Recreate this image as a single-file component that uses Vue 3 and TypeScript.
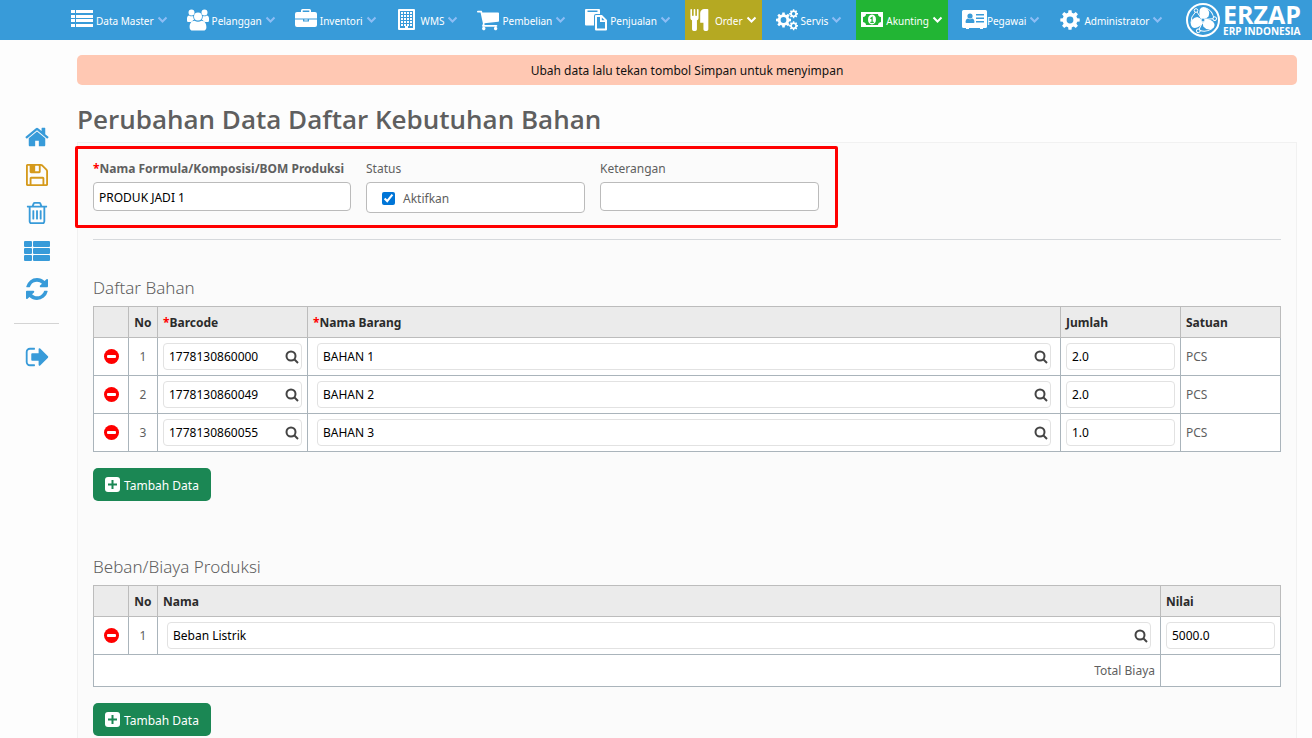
<script setup lang="ts">
import { ref } from 'vue'

interface Icon { box: string; d: string }
interface Material { barcode: string; name: string; qty: string; unit: string }
interface Cost { name: string; value: string }

const rect = (x: number, y: number, w: number, h: number, r = 0): string =>
  `M${x + r} ${y}h${w - 2 * r}a${r} ${r} 0 0 1 ${r} ${r}v${h - 2 * r}a${r} ${r} 0 0 1 ${-r} ${r}h${2 * r - w}a${r} ${r} 0 0 1 ${-r} ${-r}v${2 * r - h}a${r} ${r} 0 0 1 ${r} ${-r}z`

const disc = (cx: number, cy: number, r: number): string =>
  `M${cx - r} ${cy}a${r} ${r} 0 1 0 ${2 * r} 0a${r} ${r} 0 1 0 ${-2 * r} 0z`

const gear = (cx: number, cy: number, r: number, teeth: number, hole: number): string => {
  const step = (Math.PI * 2) / teeth
  const pts: string[] = []
  for (let i = 0; i < teeth; i++) {
    const shape: [number, number][] = [[-0.32, 0.76], [-0.2, 1], [0.2, 1], [0.32, 0.76]]
    for (const [a, k] of shape) {
      const t = (i + a) * step
      pts.push(`${(cx + Math.sin(t) * r * k).toFixed(2)} ${(cy - Math.cos(t) * r * k).toFixed(2)}`)
    }
  }
  return `M${pts.join('L')}z${disc(cx, cy, hole)}`
}

const windows = [0, 1, 2, 3, 4].flatMap(r => [0, 1, 2, 3].map(c => rect(3 + c * 3, 3 + r * 3, 2, 2))).join('')

const icons: Record<string, Icon> = {
  list: {
    box: '0 0 22 22',
    d: [1, 6, 10, 15].map(y => rect(0, y, 4, 3) + rect(5, y, 17, 3)).join(''),
  },
  users: {
    box: '0 0 22 22',
    d: disc(4.5, 3.4, 3) + disc(17.5, 3.4, 3) +
      'M2.200 6.500C.6 6.800-.3 8 0 11.400c0 1 .6 1.600 1.600 1.600h3.300c.5-1.200 1.300-2 2.300-2.300C6.400 9.600 6 8.400 6.300 6.900 5 7.600 3.500 7.500 2.200 6.500z' +
      'M19.800 6.500c1.600.3 2.500 1.500 2.200 4.900 0 1-.6 1.600-1.600 1.600h-3.300c-.5-1.200-1.300-2-2.300-2.300.8-1.100 1.200-2.300.9-3.800 1.300.7 2.800.6 4.100-.4z' +
      disc(11, 7.4, 4) +
      'M7.500 11.700c2.200 1.400 4.800 1.400 7 0 3 .2 4.900 2.300 4.900 6.500 0 2.300-1.300 3.400-3.100 3.400H5.700C3.900 21.600 2.600 20.500 2.600 18.200c0-4.200 1.900-6.300 4.900-6.500z',
  },
  briefcase: {
    box: '0 0 22 22',
    d: 'M6 3V1.500Q6 0 7.500 0h7Q16 0 16 1.500V3h4q2 0 2 2v4.500H0V5q0-2 2-2zM7.700 3h6.600V1.600H7.700zM0 10.500h8v2h6v-2h8v5.500q0 2-2 2H2q-2 0-2-2zM9.300 10.500h3.400v1H9.300z',
  },
  building: {
    box: '-2 0 22 22',
    d: rect(0, 0, 17, 21, 1) + 'M2 2v17h5v-2h3v2h5V2z' + windows,
  },
  cart: {
    box: '0 128 1664 1536',
    d: 'M640 1536q0 52-38 90t-90 38-90-38-38-90 38-90 90-38 90 38 38 90zm896 0q0 52-38 90t-90 38-90-38-38-90 38-90 90-38 90 38 38 90zm128-1088v512q0 24-16.500 42.500T1607 1024L563 1146q13 60 13 70 0 16-24 64h920q26 0 45 19t19 45-19 45-45 19H448q-26 0-45-19t-19-45q0-11 8-31.500t16-36 21.500-40T445 1134L268 320H64q-26 0-45-19T0 256t19-45 45-19h256q16 0 28.500 6.500t19.500 15.500 13 24.500 8 26 5.500 29.500 4.500 26h1201q26 0 45 19t19 45z',
  },
  paste: {
    box: '0 0 22 22',
    d: 'M1 0h13q1 0 1 1v4h-4q-2 0-2 2v9.500H1q-1 0-1-1V1q0-1 1-1zM2.500 1.500v1.400h10V1.500zM11 6h6l5 5v9.500q0 1-1 1H11q-1 0-1-1V7q0-1 1-1zM12 8v11.600h8V13h-5V8zM16.800 8.400v2.800h2.800z',
  },
  cutlery: {
    box: '128 64 1408 1728',
    d: 'M640 128v640q0 61-35.500 111T512 950v714q0 52-38 90t-90 38H256q-52 0-90-38t-38-90V950q-57-21-92.500-71T0 768V128q0-26 19-45T64 64t45 19 19 45v416q0 26 19 45t45 19 45-19 19-45V128q0-26 19-45t45-19 45 19 19 45v416q0 26 19 45t45 19 45-19 19-45V128q0-26 19-45t45-19 45 19 19 45zm768 0v1536q0 52-38 90t-90 38h-128q-52 0-90-38t-38-90v-512H800q-13 0-22.500-9.500T768 1120V384q0-132 94-226t226-94h256q26 0 45 19t19 45z',
  },
  cogs: {
    box: '0 0 22 22',
    d: gear(7.500, 11, 7.600, 8, 2.900) + gear(17.600, 4.800, 4.500, 8, 1.700) + gear(17.600, 16.800, 4.500, 8, 1.700),
  },
  money: {
    box: '0 0 22 22',
    d: rect(0, 3, 22, 15) + 'M5 5H17q0 2.500 3 3v5q-3 .5-3 3H5q0-2.500-3-3V8q3-.5 3-3z' +
      'M11 5.500c2.600 0 4 2.200 4 5s-1.400 5-4 5-4-2.200-4-5 1.400-5 4-5zM11.200 7.500L9.300 9v1h1.200v2.700H9.300V14h3.500v-1.300h-1.100V7.500z',
  },
  card: {
    box: '0 0 25 22',
    d: 'M1.500 1h22Q25 1 25 2.500v15q0 1.500-1.500 1.500H21v1h-3v-1H7v1H4v-1H1.500Q0 19 0 17.500v-15Q0 1 1.500 1z' +
      disc(8, 7, 2.600) + 'M5.500 9.500Q3.500 10 3.500 13q0 1 1 1h7q1 0 1-1 0-3-2-3.500-2.500 1.500-5 0z' +
      rect(14, 5, 8, 1.400) + rect(14, 8.500, 8, 1.400) + rect(14, 12, 8, 1.400),
  },
  cog: { box: '0 0 22 22', d: gear(11, 11, 9.800, 8, 3.400) },
  home: {
    box: '0 128 1664 1536',
    d: 'M1408 992v480q0 26-19 45t-45 19H960v-384H704v384H320q-26 0-45-19t-19-45V992q0-1 .5-3t.5-3l575-474 575 474q1 2 1 6zm223-69l-62 74q-8 9-21 11h-3q-13 0-21-7L832 424 140 1001q-12 8-24 7-13-2-21-11l-62-74q-8-10-7-23.500T37 878L756 279q32-26 76-26t76 26l244 204V288q0-14 9-23t23-9h192q14 0 23 9t9 23v408l219 182q10 8 11 21.500t-7 23.500z',
  },
  save: {
    box: '0 128 1536 1536',
    d: 'M384 1536h768v-384H384v384zm896 0h128V640q0-14-10-38.500t-20-34.500l-281-281q-10-10-34-20t-39-10v416q0 40-28 68t-68 28H352q-40 0-68-28t-28-68V256H128v1280h128v-416q0-40 28-68t68-28h832q40 0 68 28t28 68v416zM896 608V288q0-13-9.500-22.500T864 256H672q-13 0-22.500 9.500T640 288v320q0 13 9.500 22.500T672 640h192q13 0 22.500-9.500T896 608zm640 32v928q0 40-28 68t-68 28H96q-40 0-68-28t-28-68V224q0-40 28-68t68-28h928q40 0 88 20t76 48l280 280q28 28 48 76t20 88z',
  },
  trash: {
    box: '0 128 1408 1536',
    d: 'M512 736v576q0 14-9 23t-23 9h-64q-14 0-23-9t-9-23V736q0-14 9-23t23-9h64q14 0 23 9t9 23zm256 0v576q0 14-9 23t-23 9h-64q-14 0-23-9t-9-23V736q0-14 9-23t23-9h64q14 0 23 9t9 23zm256 0v576q0 14-9 23t-23 9h-64q-14 0-23-9t-9-23V736q0-14 9-23t23-9h64q14 0 23 9t9 23zm128 724V512H256v948q0 22 7 40.500t14.500 27 10.500 8.500h832q3 0 10.500-8.500t14.500-27 7-40.500zM480 384h448l-48-117q-7-9-17-11H546q-10 2-17 11zm928 32v64q0 14-9 23t-23 9h-96v948q0 83-47 143.500t-113 60.500H288q-66 0-113-58.500T128 1464V512H32q-14 0-23-9t-9-23v-64q0-14 9-23t23-9h309l70-167q15-37 54-63t79-26h320q40 0 79 26t54 63l70 167h309q14 0 23 9t9 23z',
  },
  rows: {
    box: '0 0 26 22',
    d: [1, 8, 15].map(y => rect(0, y, 8, 6, 1) + rect(9, y, 17, 6, 1)).join(''),
  },
  refresh: {
    box: '0 128 1536 1536',
    d: 'M1511 1056q0 5-1 7-64 268-268 434.500T764 1664q-146 0-282.500-55T238 1452l-129 129q-19 19-45 19t-45-19-19-45v-448q0-26 19-45t45-19h448q26 0 45 19t19 45-19 45l-137 137q71 66 161 102t187 36q134 0 250-65t186-179q11-17 53-117 8-23 30-23h192q13 0 22.500 9.500t9.500 22.500zm25-800v448q0 26-19 45t-45 19h-448q-26 0-45-19t-19-45 19-45l138-138Q969 384 768 384q-134 0-250 65T332 628q-11 17-53 117-8 23-30 23H50q-13 0-22.500-9.500T18 736v-7q65-268 270-434.500T768 128q146 0 284 55.500T1297 340l130-129q19-19 45-19t45 19 19 45z',
  },
  exit: {
    box: '0 128 1568 1536',
    d: 'M640 1440q0 4 1 20t.5 26.500-3 23.500-10 19.500-20.500 6.500H288q-119 0-203.500-84.500T0 1248V544q0-119 84.500-203.500T288 256h320q13 0 22.500 9.500T640 288q0 4 1 20t.5 26.500-3 23.500-10 19.500T608 384H288q-66 0-113 47t-47 113v704q0 66 47 113t113 47h312q40 4 40 32zm928-544q0 26-19 45l-544 544q-19 19-45 19t-45-19-19-45v-288H448q-26 0-45-19t-19-45V704q0-26 19-45t45-19h448V352q0-26 19-45t45-19 45 19l544 544q19 19 19 45z',
  },
}

const menu = [
  { label: 'Data Master', icon: 'list' },
  { label: 'Pelanggan', icon: 'users' },
  { label: 'Inventori', icon: 'briefcase' },
  { label: 'WMS', icon: 'building' },
  { label: 'Pembelian', icon: 'cart' },
  { label: 'Penjualan', icon: 'paste' },
  { label: 'Order', icon: 'cutlery', tone: 'olive' },
  { label: 'Servis', icon: 'cogs' },
  { label: 'Akunting', icon: 'money', tone: 'green' },
  { label: 'Pegawai', icon: 'card' },
  { label: 'Administrator', icon: 'cog' },
]

const tools = [
  { label: 'Beranda', icon: 'home' },
  { label: 'Simpan', icon: 'save' },
  { label: 'Hapus', icon: 'trash' },
  { label: 'Daftar', icon: 'rows' },
  { label: 'Muat ulang', icon: 'refresh' },
]

const formulaName = ref('PRODUK JADI 1')
const active = ref(true)
const note = ref('')
const materials = ref<Material[]>([
  { barcode: '1778130860000', name: 'BAHAN 1', qty: '2.0', unit: 'PCS' },
  { barcode: '1778130860049', name: 'BAHAN 2', qty: '2.0', unit: 'PCS' },
  { barcode: '1778130860055', name: 'BAHAN 3', qty: '1.0', unit: 'PCS' },
])
const costs = ref<Cost[]>([{ name: 'Beban Listrik', value: '5000.0' }])

const addMaterial = () => materials.value.push({ barcode: '', name: '', qty: '', unit: '' })
const addCost = () => costs.value.push({ name: '', value: '' })
</script>

<template>
  <div class="app">
    <header class="topbar">
      <nav class="menu">
        <a v-for="m in menu" :key="m.label" href="#" class="menu-item" :class="m.tone">
          <svg class="menu-icon" :class="m.icon" :viewBox="icons[m.icon].box" aria-hidden="true">
            <path :d="icons[m.icon].d" fill-rule="evenodd" />
          </svg>
          <span class="menu-label">{{ m.label }}</span>
          <svg class="caret" viewBox="0 0 11 8" aria-hidden="true"><path d="M1.500 1.500l4 4 4-4" /></svg>
        </a>
      </nav>
      <a href="#" class="brand">
        <svg class="brand-mark" viewBox="0 0 34 34" aria-hidden="true">
          <circle cx="17" cy="17" r="16" class="ring" />
          <g v-for="a in [0, 120, 240]" :key="a" :transform="`rotate(${a} 17 17)`">
            <path class="leaf" d="M14.500 15.500Q12.500 10 14 6 16 3 20 4.500 24.500 8 22.500 13.500L20 15.500z" />
            <path class="orbit" d="M9.500 9Q4.500 13.500 5 20" />
            <path class="orbit" d="M11 9l4 6" />
            <circle class="node" cx="10" cy="7.500" r="1.800" />
          </g>
          <circle class="node" cx="17" cy="17" r="2" />
        </svg>
        <span class="brand-text">
          <span class="brand-name">ERZAP</span>
          <span class="brand-sub">ERP INDONESIA</span>
        </span>
      </a>
    </header>

    <div class="body">
      <aside class="sidebar">
        <button v-for="t in tools" :key="t.label" type="button" class="tool" :class="t.icon" :aria-label="t.label">
          <svg :viewBox="icons[t.icon].box"><path :d="icons[t.icon].d" fill-rule="evenodd" /></svg>
        </button>
        <hr class="side-line">
        <button type="button" class="tool exit" aria-label="Keluar">
          <svg :viewBox="icons.exit.box"><path :d="icons.exit.d" /></svg>
        </button>
      </aside>

      <main class="main">
        <div class="notice" role="status">Ubah data lalu tekan tombol Simpan untuk menyimpan</div>
        <h1>Perubahan Data Daftar Kebutuhan Bahan</h1>

        <form class="panel" @submit.prevent>
          <div class="fields">
            <div class="field wide">
              <label for="formula" class="strong"><span class="req">*</span>Nama Formula/Komposisi/BOM Produksi</label>
              <input id="formula" v-model="formulaName" type="text" class="text-box">
            </div>
            <div class="field">
              <span class="field-label">Status</span>
              <label class="check-box"><input v-model="active" type="checkbox"><span>Aktifkan</span></label>
            </div>
            <div class="field">
              <label for="note">Keterangan</label>
              <input id="note" v-model="note" type="text" class="text-box">
            </div>
            <div class="highlight"></div>
          </div>
          <hr class="divider">

          <section class="block">
            <h2>Daftar Bahan</h2>
            <table>
              <colgroup><col class="c-act"><col class="c-no"><col class="c-code"><col><col class="c-qty"><col class="c-unit"></colgroup>
              <thead>
                <tr>
                  <th></th><th class="num">No</th><th><span class="req">*</span>Barcode</th>
                  <th><span class="req">*</span>Nama Barang</th><th>Jumlah</th><th>Satuan</th>
                </tr>
              </thead>
              <tbody>
                <tr v-for="(row, i) in materials" :key="i">
                  <td class="act">
                    <button type="button" class="remove" aria-label="Hapus baris" @click="materials.splice(i, 1)">
                      <svg viewBox="0 0 15 15"><circle cx="7.500" cy="7.500" r="7.500" /><rect x="3" y="6" width="9" height="3" rx="1" /></svg>
                    </button>
                  </td>
                  <td class="num">{{ i + 1 }}</td>
                  <td>
                    <div class="lookup">
                      <input v-model="row.barcode" type="text" aria-label="Barcode">
                      <button type="button" aria-label="Cari barcode"><svg viewBox="0 0 14 14"><circle cx="6" cy="6" r="4.500" /><path d="M9 9l4 4" /></svg></button>
                    </div>
                  </td>
                  <td class="inset">
                    <div class="lookup">
                      <input v-model="row.name" type="text" aria-label="Nama Barang">
                      <button type="button" aria-label="Cari barang"><svg viewBox="0 0 14 14"><circle cx="6" cy="6" r="4.500" /><path d="M9 9l4 4" /></svg></button>
                    </div>
                  </td>
                  <td><div class="lookup"><input v-model="row.qty" type="text" aria-label="Jumlah"></div></td>
                  <td>{{ row.unit }}</td>
                </tr>
              </tbody>
            </table>
            <button type="button" class="add" @click="addMaterial">
              <svg viewBox="0 0 15 15"><rect width="15" height="15" rx="3" /><path d="M7.500 3v9M3 7.500h9" /></svg>
              <span>Tambah Data</span>
            </button>
          </section>

          <section class="block">
            <h2>Beban/Biaya Produksi</h2>
            <table>
              <colgroup><col class="c-act"><col class="c-no"><col><col class="c-qty"></colgroup>
              <thead>
                <tr><th></th><th class="num">No</th><th>Nama</th><th>Nilai</th></tr>
              </thead>
              <tbody>
                <tr v-for="(row, i) in costs" :key="i">
                  <td class="act">
                    <button type="button" class="remove" aria-label="Hapus baris" @click="costs.splice(i, 1)">
                      <svg viewBox="0 0 15 15"><circle cx="7.500" cy="7.500" r="7.500" /><rect x="3" y="6" width="9" height="3" rx="1" /></svg>
                    </button>
                  </td>
                  <td class="num">{{ i + 1 }}</td>
                  <td class="inset">
                    <div class="lookup">
                      <input v-model="row.name" type="text" aria-label="Nama biaya">
                      <button type="button" aria-label="Cari biaya"><svg viewBox="0 0 14 14"><circle cx="6" cy="6" r="4.500" /><path d="M9 9l4 4" /></svg></button>
                    </div>
                  </td>
                  <td><div class="lookup"><input v-model="row.value" type="text" aria-label="Nilai"></div></td>
                </tr>
              </tbody>
              <tfoot>
                <tr><td colspan="3" class="total">Total Biaya</td><td></td></tr>
              </tfoot>
            </table>
            <button type="button" class="add" @click="addCost">
              <svg viewBox="0 0 15 15"><rect width="15" height="15" rx="3" /><path d="M7.500 3v9M3 7.500h9" /></svg>
              <span>Tambah Data</span>
            </button>
          </section>
        </form>
      </main>
    </div>
  </div>
</template>

<style>
html {
  scrollbar-width: none;
}
body {
  background: #fdfdfd;
}
</style>

<style scoped>
.app {
  min-height: 100vh;
  font-family: "Noto Sans", "Open Sans", sans-serif;
  font-size: 12px;
  line-height: 16px;
  color: #5f5f5f;
}
.app * {
  box-sizing: border-box;
}
button,
input {
  font: inherit;
}
button {
  padding: 0;
  border: 0;
  background: none;
  cursor: pointer;
}
.topbar {
  display: flex;
  justify-content: space-between;
  height: 40px;
  padding: 0 11px 0 66px;
  background: #389bd9;
}
.menu {
  display: flex;
  gap: 9px;
}
.menu-item {
  display: flex;
  align-items: center;
  padding: 0 5px;
  color: #fff;
  font-size: 10px;
  text-decoration: none;
  white-space: nowrap;
}
.menu-item.olive {
  background: #b5a922;
}
.menu-item.green {
  background: #22b534;
}
.menu-icon {
  width: 22px;
  height: 22px;
  margin-right: 3px;
  fill: #fff;
}
.menu-icon.card {
  width: 25px;
  margin-right: 0;
}
.menu-label {
  padding-top: 2px;
}
.caret {
  width: 11px;
  height: 8px;
  margin-left: 3px;
  fill: none;
  stroke: #8dbdf5;
  stroke-width: 2;
}
.olive .caret,
.green .caret {
  stroke: #fff;
}
.brand {
  display: flex;
  align-items: center;
  gap: 3px;
  color: #fff;
  text-decoration: none;
  white-space: nowrap;
}
.brand-mark {
  width: 34px;
  height: 34px;
  fill: #fff;
}
.ring,
.orbit {
  fill: none;
  stroke: #fff;
  stroke-width: 2;
}
.orbit {
  stroke-width: 1;
}
.node {
  fill: #389bd9;
  stroke: #fff;
}
.brand-text {
  display: flex;
  flex-direction: column;
  font-family: "Open Sans", sans-serif;
  font-weight: 700;
}
.brand-name {
  font-size: 25px;
  line-height: 22px;
}
.brand-sub {
  font-size: 10px;
  line-height: 12px;
}
.body {
  display: flex;
}
.sidebar {
  display: flex;
  flex: 0 0 77px;
  flex-direction: column;
  align-items: center;
  gap: 16px;
  padding: 86px 4px 0 0;
}
.tool {
  display: flex;
  color: #389bd9;
}
.tool svg {
  width: 26px;
  height: 22px;
  fill: currentColor;
}
.tool.save {
  color: #d59a1c;
}
.side-line {
  width: 45px;
  margin: 7px 0 6px;
  border: 0;
  border-top: 1px solid #d4d4d4;
}
.main {
  flex: 1;
  min-width: 0;
  padding: 15px 15px 0 0;
}
.notice {
  padding: 8px 7px 6px;
  border-radius: 5px;
  background: #ffc8b3;
  color: #111;
  text-align: center;
}
h1 {
  margin: 16px 0 5px;
  font-family: "Open Sans", "Noto Sans", sans-serif;
  font-size: 26px;
  font-weight: 600;
  line-height: 36px;
}
.panel {
  padding: 18px 15px 15px;
  border: 1px solid #f1f1f1;
  background: #fbfbfb;
}
.fields {
  display: flex;
  position: relative;
  gap: 15px;
}
.field {
  display: flex;
  flex: 0 0 219px;
  flex-direction: column;
  gap: 5px;
}
.field.wide {
  flex-basis: 258px;
}
.field > label,
.field-label {
  white-space: nowrap;
}
.strong {
  font-weight: 700;
}
.req {
  color: #f00;
}
.text-box,
.check-box {
  width: 100%;
  height: 29px;
  padding: 1px 5px 0;
  border: 1px solid #bbb;
  border-radius: 4px;
  background: #fff;
  color: #000;
}
.check-box {
  display: flex;
  align-items: center;
  gap: 8px;
  height: 31px;
  padding: 2px 15px 0;
  color: #5f5f5f;
}
.check-box input {
  width: 13px;
  height: 13px;
  margin: 0;
  accent-color: #0075d7;
}
.highlight {
  position: absolute;
  top: -15px;
  left: -18px;
  width: 763px;
  height: 82px;
  border: 3px solid #f00;
  border-radius: 2px;
  pointer-events: none;
}
.divider {
  margin: 26px 0 36px;
  border: 0;
  border-top: 1px solid #d6d9dc;
}
h2 {
  margin: 0 0 6px;
  font-size: 17px;
  font-weight: 300;
  line-height: 24px;
}
.block + .block {
  margin-top: 54px;
}
table {
  width: 100%;
  border-collapse: collapse;
  table-layout: fixed;
  background: #fff;
}
th,
td {
  height: 31px;
  padding: 0 5px;
  border: 1px solid #aab4bb;
  text-align: left;
}
th {
  padding-top: 1px;
  border-color: #bcbcbc;
  background: #ebebeb;
  color: #2b2b2b;
  font-weight: 700;
}
td {
  height: 38px;
}
.c-act {
  width: 35px;
}
.c-no {
  width: 29px;
}
.c-code {
  width: 150px;
}
.c-qty {
  width: 120px;
}
.c-unit {
  width: 100px;
}
.num,
.act {
  padding-right: 0;
  padding-left: 0;
  text-align: center;
}
td.inset {
  padding: 0 9px;
}
.remove {
  display: block;
  margin: 0 auto;
}
.remove svg {
  display: block;
  width: 15px;
  height: 15px;
  fill: #f00;
}
.remove rect {
  fill: #fff;
}
.lookup {
  display: flex;
  align-items: center;
  height: 27px;
  padding-right: 2px;
  border: 1px solid #e2e2e2;
  border-radius: 4px;
  background: #fff;
}
.lookup input {
  flex: 1;
  width: 100%;
  min-width: 0;
  padding: 0 0 0 5px;
  border: 0;
  background: none;
  color: #000;
}
.lookup svg {
  display: block;
  width: 14px;
  height: 14px;
  fill: none;
  stroke: #444;
  stroke-width: 2;
}
tfoot td {
  height: 32px;
  padding-top: 1px;
}
td.total {
  text-align: right;
}
.add {
  display: flex;
  align-items: center;
  gap: 4px;
  height: 33px;
  margin-top: 16px;
  padding: 0 12px;
  border-radius: 5px;
  background: #1b8754;
  color: #fff;
}
.add span {
  padding-top: 2px;
}
.add svg {
  width: 15px;
  height: 15px;
  fill: #fff;
  stroke: #1b8754;
  stroke-width: 2;
}
.add rect {
  stroke: none;
}
</style>
